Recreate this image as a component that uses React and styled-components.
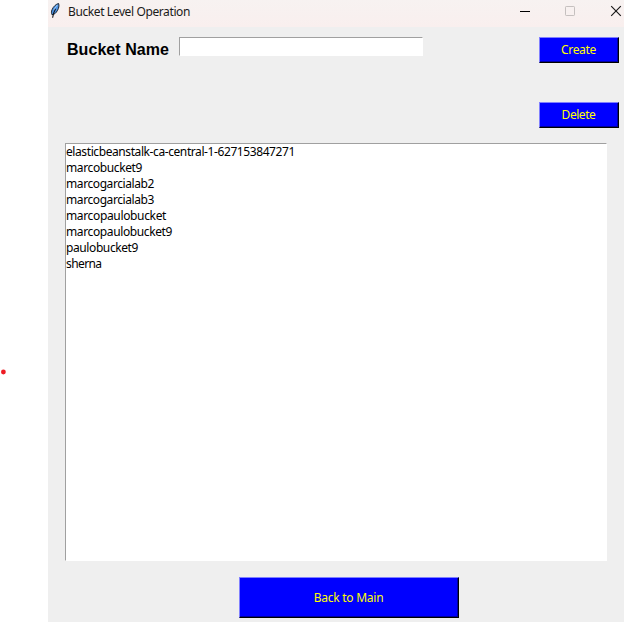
import React from "react";
import styled, { createGlobalStyle } from "styled-components";

const Global = createGlobalStyle`
  * { box-sizing: border-box; }
  body { margin: 0; background: #fff; overflow: hidden; }
`;

const Screen = styled.div`
  display: flex;
  width: 624px;
  height: 622px;
  font-family: "Noto Sans", "Open Sans", sans-serif;
  font-size: 12px;
  color: #000;
`;

const Margin = styled.div`
  width: 48px;
  flex: none;
  padding: 369px 0 0 0;
`;

const RedDot = styled.svg`
  display: block;
  width: 7px;
  height: 6px;
`;

const Window = styled.main`
  width: 576px;
  display: flex;
  flex-direction: column;
  background: #efefef;
`;

const TitleBar = styled.header`
  height: 27px;
  flex: none;
  display: flex;
  align-items: flex-start;
  padding: 2px 2px 0 2px;
  background: linear-gradient(#f7f2f1, #f9efee);
`;

const Feather = styled.svg`
  width: 11px;
  height: 17px;
  flex: none;
`;

const Title = styled.h1`
  margin: 1px 0 0 7px;
  font-size: 12px;
  line-height: 18px;
  font-weight: 400;
  letter-spacing: -0.39px;
  white-space: nowrap;
  flex: 1;
  color: #1b1a1a;
`;

const WindowControls = styled.svg`
  width: 104px;
  height: 20px;
  flex: none;
`;

const Form = styled.section`
  height: 116px;
  flex: none;
  display: flex;
  align-items: flex-start;
  padding: 10px 5px 0 19px;
`;

const Label = styled.label`
  width: 112px;
  margin-top: 1px;
  font: bold 16px/24px "Liberation Sans", Arial, sans-serif;
  letter-spacing: 0.05px;
  white-space: nowrap;
`;

const Entry = styled.input`
  width: 244px;
  height: 19px;
  padding: 0 2px;
  border: 1px solid;
  border-color: #a0a0a0 #fff #fff #a0a0a0;
  border-radius: 0;
  background: #fff;
  outline: none;
`;

const Actions = styled.div`
  margin-left: auto;
  display: flex;
  flex-direction: column;
  gap: 39px;
`;

const Button = styled.button`
  width: ${(p) => p.$width}px;
  height: ${(p) => p.$height}px;
  padding: 0 1px 1px 0;
  border: 1px solid;
  border-color: #8080ff #000 #000 #8080ff;
  border-radius: 0;
  box-shadow: inset -1px -1px 0 #0000a0;
  background: #0000ff;
  color: #ffff00;
  font: inherit;
  letter-spacing: ${(p) => p.$tracking}px;
`;

const BucketList = styled.ul`
  width: 542px;
  height: 418px;
  flex: none;
  margin: 0 0 0 17px;
  padding: 0;
  list-style: none;
  background: #fff;
  border: 1px solid;
  border-color: #a0a0a0 #fff #fff #a0a0a0;
`;

const Bucket = styled.li`
  height: 16px;
  line-height: 16px;
  white-space: nowrap;
  letter-spacing: ${(p) => p.$tracking}px;
`;

const Footer = styled.footer`
  display: flex;
  padding: 16px 0 0 191px;
`;

const buckets = [
  ["elasticbeanstalk-ca-central-1-627153847271", -0.41],
  ["marcobucket9", -0.38],
  ["marcogarcialab2", -0.41],
  ["marcogarcialab3", -0.41],
  ["marcopaulobucket", -0.35],
  ["marcopaulobucket9", -0.38],
  ["paulobucket9", -0.4],
  ["sherna", -0.6],
];

export default function App() {
  return (
    <>
      <Global />
      <Screen>
        <Margin>
          <RedDot viewBox="0 0 7 6">
            <circle cx="3.4" cy="3" r="2.4" fill="#ee1c24" />
          </RedDot>
        </Margin>
        <Window>
          <TitleBar>
            <Feather viewBox="0 0 11 17">
              <path d="M8.6 1.5C6.2 2 3.2 4.6 2 7.8C1.3 9.6 1.3 11 1.9 12.6C3.8 13 6.2 11 7.6 8.2C8.7 6.2 9.4 3.6 8.6 1.5Z" fill="#4b91e2" stroke="#1c2530" strokeWidth="1" />
              <path d="M5.6 6.8C4.1 9.4 3 12 2.6 15.8" fill="none" stroke="#16191d" strokeWidth="1.1" />
              <path d="M7.4 2.9L4 7.6" stroke="#a5cff8" strokeWidth="0.9" />
            </Feather>
            <Title>Bucket Level Operation</Title>
            <WindowControls viewBox="0 0 104 20" fill="none">
              <path d="M2 9.5H12" stroke="#000" />
              <rect x="47.5" y="4.5" width="9" height="9" rx="0.7" stroke="#c5c0bf" />
              <path d="M93.2 4.2L102.8 13.8M102.8 4.2L93.2 13.8" stroke="#1a1919" strokeWidth="1.15" />
            </WindowControls>
          </TitleBar>
          <Form>
            <Label htmlFor="bucket-name">Bucket Name</Label>
            <Entry id="bucket-name" />
            <Actions>
              <Button $width={80} $height={26} $tracking={-0.35}>Create</Button>
              <Button $width={80} $height={26} $tracking={-0.45}>Delete</Button>
            </Actions>
          </Form>
          <BucketList>
            {buckets.map(([name, tracking]) => (
              <Bucket key={name} $tracking={tracking}>{name}</Bucket>
            ))}
          </BucketList>
          <Footer>
            <Button $width={220} $height={41} $tracking={-0.25}>Back to Main</Button>
          </Footer>
        </Window>
      </Screen>
    </>
  );
}
